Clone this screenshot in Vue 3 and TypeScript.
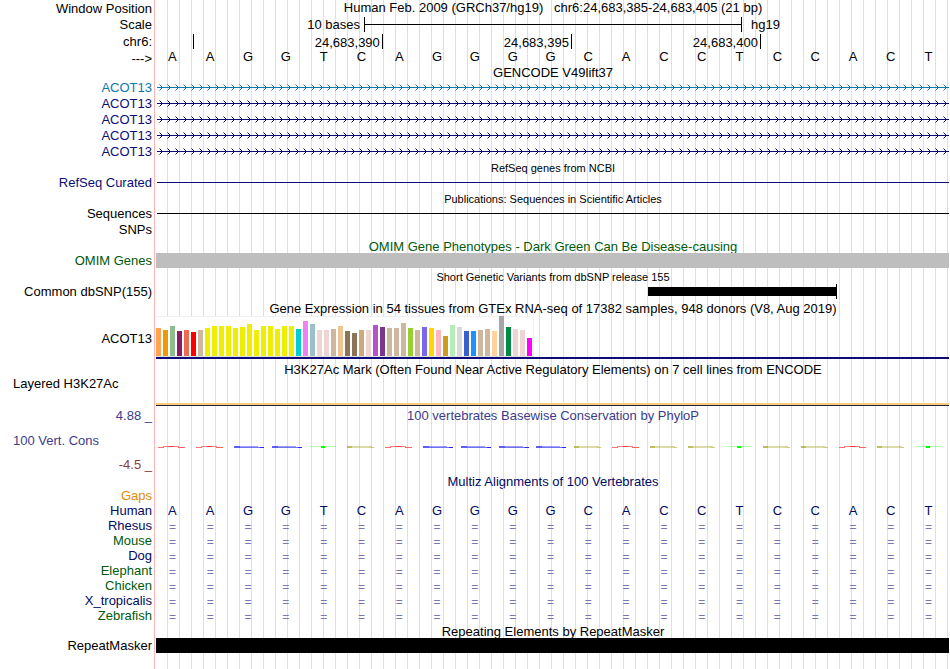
<script setup lang="ts">
type Kind =
  | 'title' | 'scale' | 'ruler' | 'bases' | 'gene' | 'line' | 'band' | 'empty'
  | 'variant' | 'expression' | 'histone' | 'conservation' | 'aligned'

interface Track {
  kind: Kind
  height: string
  label?: string
  text?: string
  tone?: string
  small?: boolean
  left?: boolean
}

const sequence: string[] = 'AAGGTCAGGGGCACCTCCACT'.split('')

const rulerTicks: { span: number; text: string }[] = [
  { span: 1, text: '' },
  { span: 5, text: '24,683,390' },
  { span: 5, text: '24,683,395' },
  { span: 5, text: '24,683,400' },
]

const tan = '#cdb79e'
const rose = '#eed5d2'
const yellow = '#eeee00'

const tissues: [string, number][] = [
  ['#ffa54f', 28], ['#ee9a00', 26], ['#8fbc8f', 30], ['#8b1c62', 25], ['#ee6a50', 26],
  ['#ff0000', 24], [tan, 26], [yellow, 28], [yellow, 30], [yellow, 30], [yellow, 30],
  [yellow, 28], [yellow, 29], [yellow, 32], [yellow, 26], [yellow, 30], [yellow, 30],
  [yellow, 27], [yellow, 30], [yellow, 30], ['#00cdcd', 27], ['#ee82ee', 35],
  ['#9ac0cd', 32], [rose, 26], [rose, 26], [tan, 27], ['#eec591', 30], ['#8b7355', 25],
  ['#8b7355', 23], ['#cdaa7d', 26], [rose, 26], ['#b452cd', 31], ['#7a378b', 29],
  [tan, 28], [tan, 28], [tan, 33], ['#9acd32', 28], [tan, 26], ['#7a67ee', 29],
  ['#ffd700', 28], ['#ffb6c1', 26], ['#cd9b1d', 20], ['#b4eeb4', 31], ['#d9d9d9', 29],
  ['#3a5fcd', 25], ['#1e90ff', 25], [tan, 26], [tan, 27], ['#ffd39b', 25],
  ['#a6a6a6', 40], ['#008b45', 29], [rose, 27], [rose, 26], ['#ff00ff', 18],
]

const tracks: Track[] = [
  { kind: 'title', height: 'h16', label: 'Window Position', text: 'Human Feb. 2009 (GRCh37/hg19)   chr6:24,683,385-24,683,405 (21 bp)' },
  { kind: 'scale', height: 'h17', label: 'Scale' },
  { kind: 'ruler', height: 'h17', label: 'chr6:' },
  { kind: 'bases', height: 'h16', label: '--->' },
  { kind: 'title', height: 'h13', text: 'GENCODE V49lift37' },
  { kind: 'gene', height: 'h16', label: 'ACOT13', tone: 'azure' },
  { kind: 'gene', height: 'h16', label: 'ACOT13', tone: 'indigo' },
  { kind: 'gene', height: 'h16', label: 'ACOT13', tone: 'indigo' },
  { kind: 'gene', height: 'h16', label: 'ACOT13', tone: 'indigo' },
  { kind: 'gene', height: 'h16', label: 'ACOT13', tone: 'indigo' },
  { kind: 'title', height: 'h16', text: 'RefSeq genes from NCBI', small: true },
  { kind: 'line', height: 'h15', label: 'RefSeq Curated', tone: 'indigo' },
  { kind: 'title', height: 'h16', text: 'Publications: Sequences in Scientific Articles', small: true },
  { kind: 'line', height: 'h15', label: 'Sequences' },
  { kind: 'empty', height: 'h16', label: 'SNPs' },
  { kind: 'title', height: 'h16', text: 'OMIM Gene Phenotypes - Dark Green Can Be Disease-causing', tone: 'green' },
  { kind: 'band', height: 'h15', label: 'OMIM Genes', tone: 'green' },
  { kind: 'title', height: 'h16', text: 'Short Genetic Variants from dbSNP release 155', small: true },
  { kind: 'variant', height: 'h15', label: 'Common dbSNP(155)' },
  { kind: 'title', height: 'h17', text: 'Gene Expression in 54 tissues from GTEx RNA-seq of 17382 samples, 948 donors (V8, Aug 2019)' },
  { kind: 'expression', height: 'h44', label: 'ACOT13' },
  { kind: 'title', height: 'h17', text: 'H3K27Ac Mark (Often Found Near Active Regulatory Elements) on 7 cell lines from ENCODE' },
  { kind: 'histone', height: 'h29', label: 'Layered H3K27Ac', left: true },
  { kind: 'title', height: 'h19', label: '4.88 _', text: '100 vertebrates Basewise Conservation by PhyloP', tone: 'slate' },
  { kind: 'conservation', height: 'h30', label: '100 Vert. Cons', tone: 'slate', left: true },
  { kind: 'empty', height: 'h19', label: '-4.5 _', tone: 'maroon' },
  { kind: 'title', height: 'h14', text: 'Multiz Alignments of 100 Vertebrates', tone: 'navy' },
  { kind: 'empty', height: 'h15', label: 'Gaps', tone: 'amber' },
  { kind: 'bases', height: 'h15', label: 'Human', tone: 'navy' },
  { kind: 'aligned', height: 'h15', label: 'Rhesus', tone: 'navy' },
  { kind: 'aligned', height: 'h15', label: 'Mouse', tone: 'green' },
  { kind: 'aligned', height: 'h15', label: 'Dog', tone: 'navy' },
  { kind: 'aligned', height: 'h15', label: 'Elephant', tone: 'green' },
  { kind: 'aligned', height: 'h15', label: 'Chicken', tone: 'green' },
  { kind: 'aligned', height: 'h15', label: 'X_tropicalis', tone: 'navy' },
  { kind: 'aligned', height: 'h15', label: 'Zebrafish', tone: 'green' },
  { kind: 'title', height: 'h15', text: 'Repeating Elements by RepeatMasker' },
  { kind: 'band', height: 'h15', label: 'RepeatMasker', tone: 'black' },
  { kind: 'empty', height: 'rest' },
]
</script>

<template>
  <main class="browser">
    <section
      v-for="(track, i) in tracks"
      :key="i"
      class="track"
      :class="[track.kind, track.height, track.tone]"
    >
      <div class="label" :class="{ left: track.left }">{{ track.label }}</div>
      <div class="plot">
        <div v-if="track.kind === 'title'" class="caption" :class="{ small: track.small }">{{ track.text }}</div>

        <div v-else-if="track.kind === 'scale'" class="scale-grid">
          <span class="scale-length">10 bases</span>
          <span class="scale-bar"><span class="scale-rule"></span></span>
          <span class="scale-db">hg19</span>
        </div>

        <div v-else-if="track.kind === 'ruler'" class="columns">
          <span v-for="(tick, t) in rulerTicks" :key="t" class="tick" :class="'span' + tick.span">{{ tick.text }}</span>
        </div>

        <div v-else-if="track.kind === 'bases'" class="columns">
          <span v-for="(base, b) in sequence" :key="b" class="base">{{ base }}</span>
        </div>

        <div v-else-if="track.kind === 'aligned'" class="columns">
          <span v-for="(base, b) in sequence" :key="b" class="base match">=</span>
        </div>

        <svg v-else-if="track.kind === 'gene'" class="strand" height="7" shape-rendering="crispEdges" aria-hidden="true">
          <defs>
            <pattern :id="'strand' + i" width="8" height="7" patternUnits="userSpaceOnUse">
              <g fill="currentColor">
                <rect x="0" y="3" width="8" height="1" />
                <rect x="4" y="2" width="1" height="1" />
                <rect x="4" y="4" width="1" height="1" />
                <rect x="3" y="1" width="1" height="1" />
                <rect x="3" y="5" width="1" height="1" />
                <rect x="2" y="0" width="1" height="1" opacity="0.5" />
                <rect x="2" y="6" width="1" height="1" opacity="0.5" />
              </g>
            </pattern>
          </defs>
          <rect width="100%" height="7" :fill="'url(#strand' + i + ')'" />
        </svg>

        <div v-else-if="track.kind === 'line'" class="hairline"></div>
        <div v-else-if="track.kind === 'band'" class="block"></div>

        <div v-else-if="track.kind === 'variant'" class="variant-grid">
          <span class="variant-bar"><span class="variant-fill"></span></span>
        </div>

        <template v-else-if="track.kind === 'expression'">
          <div class="tissues">
            <span
              v-for="([color, value], t) in tissues"
              :key="t"
              class="bar"
              :style="{ height: value + 'px', backgroundColor: color }"
            ></span>
          </div>
          <div class="gene-model"></div>
        </template>

        <div v-else-if="track.kind === 'histone'" class="signal"></div>

        <div v-else-if="track.kind === 'conservation'" class="columns">
          <span v-for="(base, b) in sequence" :key="b" class="base">
            <svg class="score" width="32" height="3" viewBox="0 0 32 3" shape-rendering="crispEdges" aria-hidden="true">
              <g v-if="base === 'A'" fill="#ff3c3c">
                <rect x="2" y="1" width="6" height="1" opacity="0.75" />
                <rect x="7" y="0" width="6" height="1" opacity="0.65" />
                <rect x="13" y="0" width="5" height="1" />
                <rect x="18" y="0" width="5" height="1" opacity="0.65" />
                <rect x="22" y="1" width="7" height="1" opacity="0.8" />
              </g>
              <g v-else-if="base === 'G'" fill="#2828f0">
                <rect x="2" y="0" width="6" height="2" opacity="0.75" />
                <rect x="8" y="0" width="18" height="1" opacity="0.45" />
                <rect x="8" y="1" width="20" height="1" opacity="0.65" />
                <rect x="28" y="1" width="4" height="1" />
              </g>
              <g v-else-if="base === 'T'" fill="#00ff00">
                <rect x="2" y="0" width="26" height="1" opacity="0.3" />
                <rect x="13" y="0" width="4" height="2" />
              </g>
              <g v-else fill="#a8a82c">
                <rect x="2" y="0" width="5" height="2" opacity="0.75" />
                <rect x="7" y="0" width="18" height="2" opacity="0.4" />
                <rect x="24" y="0" width="3" height="1" opacity="0.4" />
                <rect x="25" y="1" width="4" height="1" opacity="0.6" />
              </g>
            </svg>
          </span>
        </div>
      </div>
    </section>
  </main>
</template>

<style>
body {
  margin: 0;
  background: #fff;
}
</style>

<style scoped>
.browser {
  display: flex;
  flex-direction: column;
  min-height: 100vh;
  overflow: hidden;
  font-family: "Liberation Sans", Arial, Helvetica, sans-serif;
  font-size: 13px;
  line-height: 15px;
  color: #000;
  white-space: pre;
}

.track {
  display: grid;
  grid-template-rows: minmax(0, 1fr);
  grid-template-columns: 154px minmax(0, 1fr);
}

.h13 { height: 13px; }
.h14 { height: 14px; }
.h15 { height: 15px; }
.h16 { height: 16px; }
.h17 { height: 17px; }
.h19 { height: 19px; }
.h29 { height: 29px; }
.h30 { height: 30px; }
.h44 { height: 44px; }
.rest { flex: 1; }

.azure { color: #0c78b0; }
.indigo { color: #0c0c78; }
.green { color: #005a0a; }
.slate { color: #3c3c8c; }
.maroon { color: #8c3c3c; }
.navy { color: #000a64; }
.amber { color: #e68a0a; }

.label {
  display: flex;
  align-items: center;
  justify-content: flex-end;
  padding-right: 2px;
}

.label.left {
  justify-content: flex-start;
  padding-left: 13px;
}

.histone .label {
  align-items: flex-start;
  line-height: 14px;
}

.plot {
  display: flex;
  flex-direction: column;
  justify-content: center;
  padding-left: 1px;
  border-left: 1px solid #ffb4b4;
  background: repeating-linear-gradient(90deg, #dcdcf8 0 1px, transparent 1px 12px) 12px 0 no-repeat;
}

.title.h15 .plot,
.title.h16 .plot,
.title.h17 .plot {
  justify-content: flex-end;
}

.title.h15 .caption,
.title.h16 .caption {
  line-height: 13px;
}

.title:first-child .plot {
  justify-content: flex-start;
}

.title:first-child .caption {
  line-height: 16px;
}

.caption {
  text-align: center;
}

.caption.small {
  font-size: 11px;
}

.scale-grid {
  display: grid;
  grid-template-columns: minmax(0, 11fr) minmax(0, 20fr) minmax(0, 11fr);
}

.scale-length {
  padding-right: 4px;
  text-align: right;
}

.scale-bar {
  display: flex;
  align-items: center;
  border: solid #000;
  border-width: 0 1px;
}

.scale-rule {
  flex: 1;
  height: 1px;
  background: #000;
}

.scale-db {
  padding-left: 9px;
}

.columns {
  display: grid;
  grid-template-columns: repeat(21, minmax(0, 1fr));
}

.tick {
  height: 15px;
  padding-right: 2px;
  border-right: 1px solid #000;
  line-height: 17px;
  text-align: right;
}

.span5 {
  grid-column: span 5;
}

.base {
  display: flex;
  justify-content: center;
  padding-right: 5px;
}

.bases .plot,
.aligned .plot {
  justify-content: flex-start;
}

.bases .base {
  line-height: 14px;
}

.bases.navy .base {
  line-height: 16px;
}

.match {
  font-size: 12px;
  line-height: 19px;
  color: #7878b0;
}

.strand {
  display: block;
  width: calc(100% - 2px);
  margin-left: 1px;
}

.hairline {
  height: 1px;
  margin: 0 1px;
  background: currentColor;
}

.block {
  height: 15px;
  margin-right: 1px;
  background: #bebebe;
}

.black .block {
  background: #000;
}

.variant-grid {
  display: grid;
  grid-template-columns: minmax(0, 13fr) minmax(0, 5fr) minmax(0, 3fr);
}

.variant-bar {
  display: flex;
  grid-column: 2;
  align-items: center;
  height: 15px;
  border-right: 1px solid #000;
}

.variant-fill {
  flex: 1;
  height: 9px;
  background: #000;
}

.expression .plot {
  justify-content: flex-start;
}

.tissues {
  display: flex;
  align-items: flex-end;
  align-self: flex-start;
  gap: 2px;
  box-sizing: border-box;
  height: 41px;
  border-bottom: 1px solid #e0e0e0;
  background: #fff;
  box-shadow: inset 0 1px #f0f0f0, inset -1px 0 #f0f0f0;
}

.bar {
  width: 5px;
}

.bar:last-child {
  margin-right: 2px;
}

.gene-model {
  height: 2px;
  margin-right: 1px;
  background: #0c0c78;
}

.histone .plot {
  justify-content: flex-end;
}

.signal {
  height: 2px;
  margin-right: 1px;
  border-bottom: 1px solid #202040;
  background: #ffcc78;
}

.conservation .plot {
  justify-content: flex-start;
  padding-top: 21px;
}

.score {
  flex: none;
}
</style>
